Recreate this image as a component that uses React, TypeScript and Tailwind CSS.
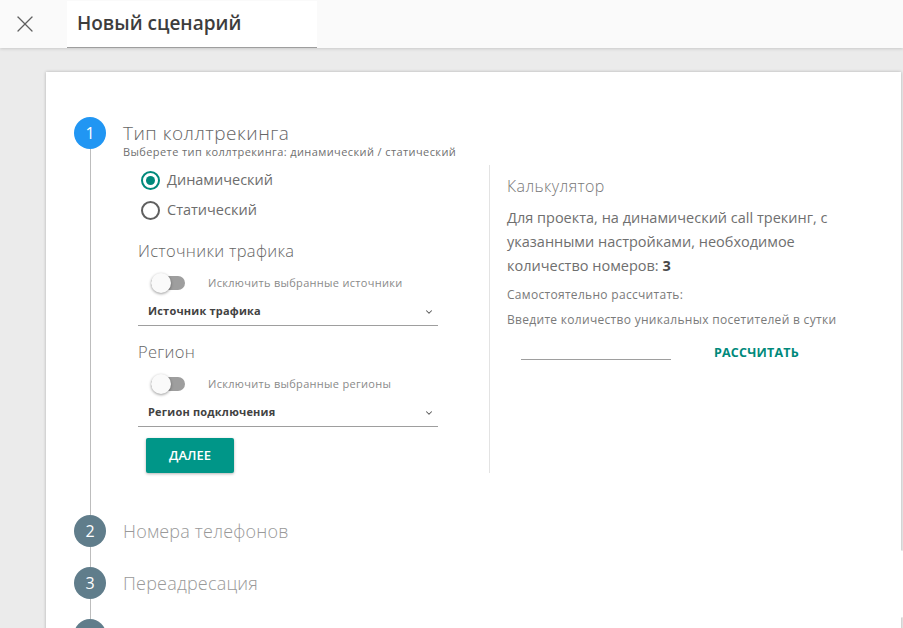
import { ChevronDown, X } from 'lucide-react'

const font = { fontFamily: '"Open Sans", "Liberation Sans", sans-serif' }

function Radio({ checked, label }: { checked?: boolean; label: string }) {
  return (
    <label className="flex h-[30px] items-center gap-[7px] pl-[3px]">
      <span
        className={`flex size-[19px] items-center justify-center rounded-full border-2 ${
          checked ? 'border-[#00897b]' : 'border-[#5f5f5f]'
        }`}
      >
        {checked && <span className="size-[9px] rounded-full bg-[#00897b]" />}
      </span>
      <span className="text-[14.5px] text-[#6d6d6d]">{label}</span>
    </label>
  )
}

function Toggle({ label }: { label: string }) {
  return (
    <div className="mt-[5px] flex h-[26px] items-center pl-[13px]">
      <span className="relative h-[14px] w-[34px] rounded-full bg-[#9e9e9e]">
        <span className="absolute -top-[3px] left-0 size-[20px] rounded-full bg-[#fafafa] shadow-[0_1px_3px_rgba(0,0,0,0.4)]" />
      </span>
      <span className="ml-[23px] text-[11px] tracking-[0.3px] text-[#8a8a8a]">{label}</span>
    </div>
  )
}

function Select({ label }: { label: string }) {
  return (
    <div className="flex h-[30px] w-[300px] items-center justify-between border-b border-[#9e9e9e] pl-[10px] pr-[4px] pt-[2px]">
      <span className="text-[11px] font-bold tracking-[0.2px] text-[#424242]">{label}</span>
      <ChevronDown className="size-[10px] text-[#555]" strokeWidth={2.5} />
    </div>
  )
}

function Step({
  n,
  title,
  active,
  last,
  children,
}: {
  n: number
  title: string
  active?: boolean
  last?: boolean
  children?: React.ReactNode
}) {
  return (
    <div className="flex gap-[17px]">
      <div className="flex w-8 flex-col items-center">
        <div
          className={`flex size-8 shrink-0 items-center justify-center rounded-full text-[16px] text-white ${
            active ? 'bg-[#2196f3]' : 'bg-[#607d8b]'
          }`}
        >
          {n}
        </div>
        {!last && <div className="w-px flex-1 bg-[#bdbdbd]" />}
      </div>
      <div className={`flex-1 ${children ? 'pb-[42px]' : 'pb-[20px]'}`}>
        <div
          className={`leading-8 font-light ${
            active ? 'text-[19px] tracking-[0.5px] text-[#666666]' : 'text-[18px] tracking-[0.2px] text-[#999999]'
          }`}
        >
          {title}
        </div>
        {children}
      </div>
    </div>
  )
}

export default function App() {
  return (
    <div className="relative h-[628px] overflow-hidden bg-[#ebebeb]" style={font}>
      <header className="relative z-10 flex h-[48px] items-center bg-[#fafafa] shadow-[0_1px_3px_rgba(0,0,0,0.15)]">
        <X className="ml-[11px] size-[28px] text-[#606060]" strokeWidth={1.1} />
        <div className="ml-[28px] flex h-[47px] w-[250px] items-center border-b border-[#9e9e9e] bg-white pl-[10px]">
          <span className="text-[19px] font-semibold text-[#3d3d3d]">Новый сценарий</span>
        </div>
      </header>

      <main className="ml-[46px] mr-[2px] mt-[24px] bg-white pl-[28px] pt-[45px] shadow-[0_0_3px_rgba(0,0,0,0.25)]">
        <Step n={1} title="Тип коллтрекинга" active>
          <div className="-mt-[3px] text-[11px] leading-[12px] tracking-[0.4px] text-[#6f6f6f]">
            Выберете тип коллтрекинга: динамический / статический
          </div>
          <div className="mt-[7px] flex">
            <div className="w-[366px] pl-[15px]">
              <Radio checked label="Динамический" />
              <Radio label="Статический" />
              <div className="mt-[12px] text-[16.5px] font-light leading-[28px] tracking-[0.3px] text-[#666666]">
                Источники трафика
              </div>
              <Toggle label="Исключить выбранные источники" />
              <Select label="Источник трафика" />
              <div className="mt-[12px] text-[16.5px] font-light leading-[28px] tracking-[0.3px] text-[#666666]">
                Регион
              </div>
              <Toggle label="Исключить выбранные регионы" />
              <Select label="Регион подключения" />
              <button className="ml-[8px] mt-[11px] h-[35px] w-[88px] rounded-[2px] bg-[#009688] text-[13px] font-semibold text-white shadow-[0_1px_3px_rgba(0,0,0,0.3)]">
                ДАЛЕЕ
              </button>
            </div>
            <div className="border-l border-[#e3e3e3] pl-[17px] pt-[9px]">
              <div className="text-[16px] font-light leading-[24px] tracking-[0.4px] text-[#777777]">Калькулятор</div>
              <p className="mt-[8px] text-[14.5px] leading-[24px] text-[#6f6f6f]">
                Для проекта, на динамический call трекинг, с<br />
                указанными настройками, необходимое
                <br />
                количество номеров: <b className="text-[#4a4a4a]">3</b>
              </p>
              <div className="mt-[4px] text-[12px] leading-[25px] tracking-[0.3px] text-[#7a7a7a]">
                Самостоятельно рассчитать:
              </div>
              <div className="text-[12px] leading-[25px] tracking-[0.3px] text-[#7a7a7a]">
                Введите количество уникальных посетителей в сутки
              </div>
              <div className="mt-[6px] flex h-[30px] items-center">
                <div className="ml-[14px] h-[22px] w-[150px] self-start border-b border-[#9e9e9e]" />
                <button className="ml-[43px] text-[12.5px] font-bold tracking-[0.2px] text-[#00897b]">
                  РАССЧИТАТЬ
                </button>
              </div>
            </div>
          </div>
        </Step>
        <Step n={2} title="Номера телефонов" />
        <Step n={3} title="Переадресация" />
        <Step n={4} title="Подключение сервисов и уведомлений / настройки" last />
      </main>

      <div className="absolute left-[862px] top-[550px] size-[68px] rounded-full bg-white" />
    </div>
  )
}
